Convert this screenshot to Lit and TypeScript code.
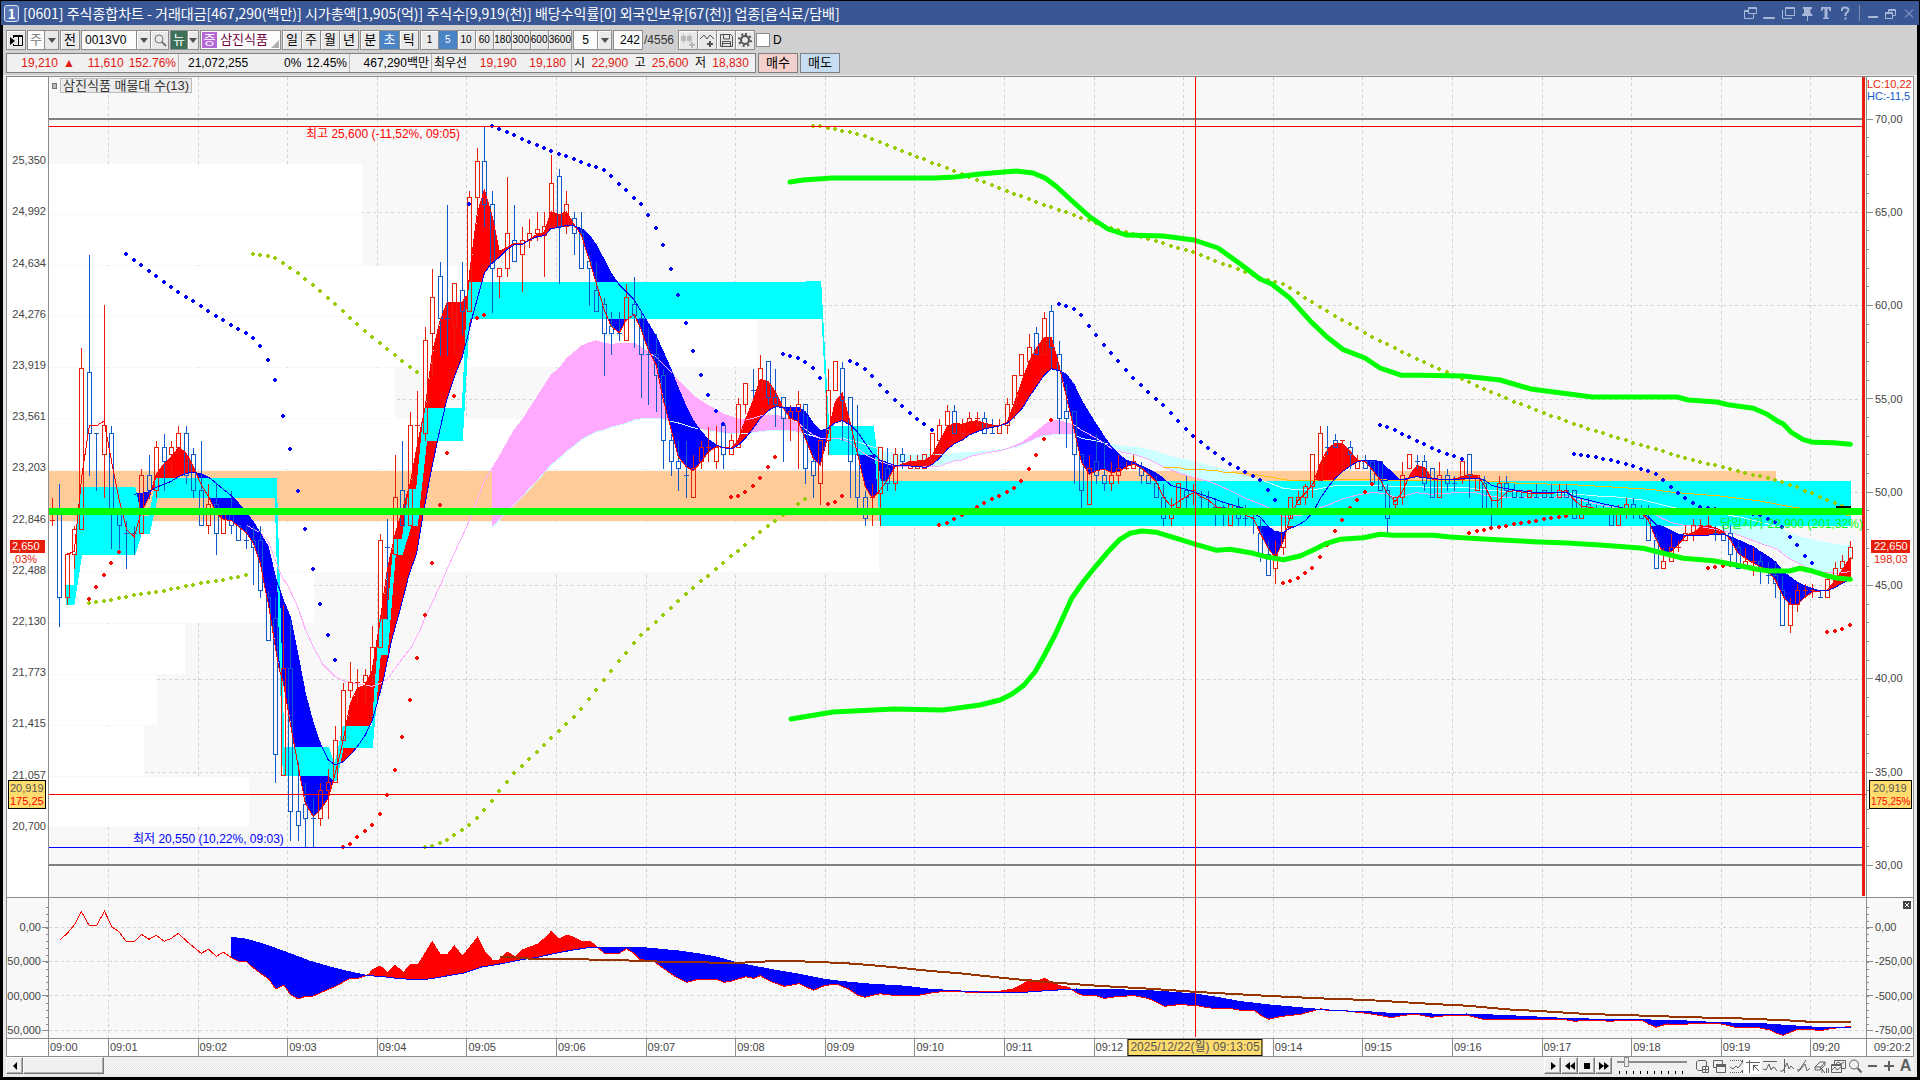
import { LitElement, html, svg, css } from "lit";
import { customElement } from "lit/decorators.js";

type Pt = [number, number];

/* Chart space: x 49..1866, price pane y 77..897, lower pane y 898..1038. */
const PLOT_X = 49;
const PLOT_W = 1817;
const MAIN_Y = 77;
const MAIN_H = 820;
const SUB_Y = 898;
const SUB_H = 140;
const BAR_X0 = 52;
const BAR_STEP = 1798 / 241;

const barX = (i: number) => Math.floor(BAR_X0 + 0.1 + i * BAR_STEP) + 0.5;

/* Points are stored in fine units relative to a local origin. */
function pts(ox: number, oy: number, s: string, sx = 3): Pt[] {
  return s
    .trim()
    .split(/\s+/)
    .map((p) => {
      const [x, y] = p.split(",").map(Number);
      return [ox + x / sx, oy + y / 3] as Pt;
    });
}

function at(line: Pt[], x: number): number {
  if (x <= line[0][0]) return line[0][1];
  for (let k = 1; k < line.length; k++) {
    const [x1, y1] = line[k];
    if (x <= x1) {
      const [x0, y0] = line[k - 1];
      return x1 === x0 ? y1 : y0 + ((y1 - y0) * (x - x0)) / (x1 - x0);
    }
  }
  return line[line.length - 1][1];
}

const linePath = (p: Pt[]) => "M" + p.map(([x, y]) => `${x.toFixed(1)} ${y.toFixed(1)}`).join("L");

/* Columns between two lines, split by which one lies on top. */
function between(a: Pt[], b: Pt[], from: number, to: number) {
  let above = "";
  let below = "";
  for (let x = Math.ceil(from); x <= to; x++) {
    const ya = at(a, x);
    const yb = at(b, x);
    const seg = `M${x + 0.5} ${ya.toFixed(1)}V${yb.toFixed(1)}`;
    if (ya < yb) above += seg;
    else below += seg;
  }
  return { above, below };
}

/* ---- candles: colour high top bottom low ---- */
const CANDLES: Array<{ i: number; oy: number; d: string }> = [
  { i: 0, oy: 200, d: `r 891 960 960 977|b 850 940 1192 1278|r 1063 1063 1192 1213|r 975 988 1063 1105|r 441 505 988 988|b 162 517 700 827|b 700 700 700 872|r 312 675 763 893|b 675 700 930 1044|b 925 925 976 1044|b 960 1000 1000 1106|b 975 1000 1000 1063|r 804 826 1000 1000|b 762 826 872 895|r 720 742 872 893|b 699 742 784 872|r 720 742 763 826|r 675 700 742 763|b 675 700 826 850|b 741 763 871 893|b 720 871 976 976|r 850 913 976 1000|b 850 913 1000 1063|r 935 935 1000 1000|b 871 935 976 1000|b 976 976 1021 1021|b 976 1021 1021 1044|b 976 1021 1042 1152|b 976 1021 1171 1192` },
  { i: 29, oy: 580, d: `b 30 52 181 181|b 50 115 523 608|r 72 265 586 586|b 115 265 694 782|b 545 694 737 782|b 606 673 715 801|b 652 715 715 801|r 606 631 715 737|r 565 606 631 715|r 436 481 607 607|r 306 331 481 481|r 243 307 331 352|r 265 307 307 375|r 265 286 307 373|r 135 202 286 306|r -140 -119 202 202|b -185 -98 -98 118` },
  { i: 46, oy: 200, d: `r 762 892 1063 1063|b 720 871 975 975|r 633 675 975 975|r 570 676 676 760|r 378 421 700 722|r 205 292 400 527|b 183 229 355 465|b 12 355 355 465|r 250 250 379 465|b 183 271 334 402` },
  { i: 56, oy: 110, d: `r 240 262 604 604|r 111 154 262 304|b 50 154 283 350|b 240 283 475 606|r 475 475 499 562|r 199 370 475 500|b 283 391 454 454|r 349 391 433 543|r 324 370 391 411|r 304 358 370 392|r 304 349 375 500|r 133 220 349 349|b 175 199 349 521|r 240 283 349 370|b 304 325 370 434|b 304 370 475 475|b 433 454 475 585|b 454 541 604 604|b 562 583 670 797|b 604 650 670 734|b 604 670 670 692|r 520 562 691 691|b 499 583 616 713|b 604 625 733 863|b 649 733 733 884|b 670 733 796 905|b 775 796 991 1076|b 970 991 1054 1097|b 990 1054 1075 1141|b 990 1097 1097 1163|r 1033 1076 1162 1162|r 990 1012 1054 1076|r 948 1012 1012 1055|r 945 1012 1054 1076|b 945 945 1033 1076|r 970 991 1033 1033|r 863 884 1012 1012|r 820 820 884 910|b 775 841 841 863|r 733 775 841 841|b 754 754 862 884|b 775 862 884 948|b 862 862 925 1055|r 884 905 925 992|r 841 884 905 1076|b 883 883 1075 1120|b 1033 1054 1096 1163|r 990 990 1120 1184|r 775 841 991 1033|r 754 754 841 841|b 754 775 871 991|b 862 862 1054 1162|b 883 1033 1162 1195|b 1141 1162 1225 1247|r 1120 1162 1162 1247|r 1012 1012 1150 1247|b 1012 1075 1120 1141|r 1012 1033 1120 1141|b 1012 1033 1054 1076|r 1033 1054 1075 1075|r 1033 1054 1075 1075` },
  { i: 117, oy: 280, d: `r 523 523 565 565|r 460 460 541 541|r 415 436 481 502|r 373 394 436 436|b 373 394 460 460|r 415 436 460 481|r 394 415 436 436|r 394 415 415 436|b 394 415 460 460|b 415 460 460 460|r 415 436 460 460|r 352 373 436 460|r 286 286 373 415|r 223 223 286 286|r 160 202 244 244|b 139 160 223 223|r 94 115 223 223|b 73 94 202 265|b 181 223 415 460|b 310 394 415 502|b 394 394 523 610|b 523 523 631 685|r 523 565 673 673|b 460 544 586 610|b 481 586 610 631|r 544 586 610 631|r 523 565 586 610|r 544 565 565 568|r 523 544 565 565|b 544 565 586 610|b 565 586 610 610|b 586 610 652 652|b 610 652 715 736|r 652 700 715 736|r 610 610 683 683|b 586 631 652 685|r 610 631 631 673|b 631 652 652 683|b 631 652 652 683|b 652 683 683 736|b 673 683 700 736|r 673 673 736 736|b 652 683 715 736|b 673 715 715 736|b 694 715 715 760|b 715 760 823 845|b 781 823 886 886|r 781 823 865 910|r 700 700 802 823|r 652 652 715 715|r 631 652 673 673|r 610 619 652 673|r 523 523 619 652|r 436 460 600 600|b 436 502 502 523|b 460 481 502 502|r 481 481 481 565|b 481 502 523 565|r 523 544 565 565|b 523 544 565 565|b 544 544 610 610|b 544 544 631 631|b 610 631 715 760|r 652 652 673 683` },
  { i: 181, oy: 400, d: `r 184 226 292 313|r 163 163 205 205|b 163 184 184 205|b 163 184 250 271|b 205 205 292 292|r 184 226 292 292|b 205 226 250 271|b 226 250 250 271|r 184 184 238 250|b 163 163 226 292|r 226 226 271 271|b 226 250 325 325|b 292 325 325 376|r 226 250 325 325|b 226 250 271 292|b 250 271 292 292|b 271 292 292 292|r 271 271 292 292|b 250 292 292 292|b 271 271 292 292|b 250 292 292 292|r 250 271 292 292|b 250 271 292 292|b 271 271 355 355|r 292 340 355 355|b 292 313 325 325|b 313 325 325 325|b 313 325 325 325|b 313 340 376 376|r 313 340 376 376|r 292 313 325 355|b 292 313 325 355|b 313 340 355 355|b 313 355 421 421|b 400 421 505 505|r 442 484 505 505|r 400 442 484 484|r 421 442 442 455|r 373 400 421 421|r 355 376 400 421|r 355 376 376 400|r 346 376 376 400|b 376 400 400 421|b 376 400 421 421|b 373 400 463 484|b 421 442 505 505|r 442 484 505 505|r 442 484 484 526|b 463 484 505 550|b 484 526 526 550|b 484 526 550 592|b 526 571 676 676|r 592 613 676 697|r 550 571 613 634|r 550 571 571 592|r 550 571 571 592|b 571 592 592 592|r 526 538 592 592|r 484 505 550 550|r 463 484 505 505|r 421 442 475 475` },
];

function candlePaths() {
  let up = "";
  let down = "";
  for (const seg of CANDLES) {
    seg.d.split("|").forEach((row, k) => {
      const [c, ...v] = row.trim().split(/\s+/);
      const [h, t, b, l] = v.map((n) => Math.floor(seg.oy + Number(n) / 3) + 0.5);
      const x = barX(seg.i + k);
      let d = `M${x} ${h}V${t}M${x} ${b}V${l}`;
      d += t === b ? `M${x - 2.5} ${t}H${x + 2.5}` : `M${x - 2} ${t}H${x + 2}V${b}H${x - 2}Z`;
      if (c === "r") up += d;
      else down += d;
    });
  }
  return { up, down };
}

/* ---- moving averages ---- */
const FAST: Pt[] = [
  ...pts(0, 200, "200,1063 223,1055 245,830 268,677 290,677 312,663 334,780 358,900 380,990 403,1010 424,935 448,890 469,822 491,793 514,770 536,742 559,760 580,800 604,855 626,890 649,940 670,958 694,962 716,980 740,1000 760,1030 781,1090 800,1190"),
  ...pts(0, 580, "805,70 826,200 838,270 850,305 871,430 895,560 916,670 940,710 961,690 985,655 1006,580 1030,480 1051,370 1072,325 1096,315 1117,270 1141,120"),
  ...pts(0, 200, "1162,1110 1186,1000 1207,930 1231,850 1253,730 1276,620 1297,460 1321,360 1342,306 1363,306 1387,308 1395,290"),
  ...pts(450, 110, "52,560 60,480 82,310 103,240 127,320 148,425 172,412 193,400 217,402 238,388 262,372 283,368 304,305 328,315 349,305 373,345 394,375 418,450 439,520 463,600 484,650 508,668 529,630 553,613 574,660 595,720 619,765 640,870 664,960 685,1040 709,1070 730,1082 754,1055 775,1025 799,1010 820,1012 844,1015 865,990 886,930 910,870 931,808 955,815 976,845 1000,895 1021,925 1045,935 1066,985 1090,1045 1111,1065 1135,970 1156,875 1177,850 1201,940 1222,1030 1246,1130 1267,1165 1291,1140 1312,1110 1336,1070 1357,1062 1381,1055 1402,1053"),
  ...pts(920, 280, "15,541 38,525 58,485 82,440 103,430 127,433 148,426 172,422 193,430 217,435 238,437 262,425 283,370 307,300 328,245 349,205 373,172 394,172 418,260 439,350 463,450 484,545 508,583 529,572 553,568 574,577 598,575 619,560 640,552 664,565 685,582 709,605 730,650 754,680 775,665 799,650 823,637 844,650 865,660 889,680 910,686 931,690 955,690 976,706 1000,715 1021,760 1045,805 1066,832 1090,785 1111,710 1135,660 1156,640 1180,610 1201,550 1225,505 1246,490 1267,492 1291,515 1312,540 1336,545 1357,570 1381,600 1402,640 1426,665 1447,635"),
  ...pts(1400, 400, "31,222 52,196 76,205 97,238 142,240 170,235 187,230 208,222 232,228 250,250 277,303 298,300 322,275 343,272 388,280 454,280 478,277 499,272 523,300 544,318 589,325 634,345 679,325 724,338 745,360 769,420 790,458 814,455 835,435 859,405 880,398 904,380 925,378 949,385 970,395 991,420 1015,460 1036,475 1060,490 1081,500 1105,515 1126,540 1150,590 1171,615 1195,612 1216,590 1240,575 1261,573 1282,570 1306,540 1327,510 1351,472"),
];

const SLOW: Pt[] = [
  ...pts(0, 200, "403,883 424,880 448,875 469,862 491,853 514,844 536,830 559,820 580,817 604,822 626,832 649,850 670,868 694,887 716,910 740,940 760,965 781,1000 805,1040 826,1130 850,1200"),
  ...pts(0, 580, "871,110 895,230 916,340 940,430 961,490 985,540 1006,555 1030,545 1051,525 1072,500 1096,465 1117,420 1130,375 1150,300 1175,180 1200,90 1222,5"),
  ...pts(0, 200, "1225,1130 1250,1060 1270,940 1290,830 1315,710 1340,600 1363,530 1387,470 1400,420 1420,340 1453,220"),
  ...pts(450, 110, "120,465 148,442 172,418 193,405 217,403 238,390 262,380 283,377 304,355 328,353 349,346 373,348 394,355 418,375 439,405 463,450 484,490 508,525 529,545 553,570 574,605 595,640 619,680 640,725 664,780 685,835 709,890 730,932 754,965 775,988 799,1005 820,1013 844,1017 865,1005 886,985 910,955 931,925 955,902 976,890 1000,892 1021,891 1045,892 1066,905 1090,940 1111,962 1135,955 1156,938 1177,932 1201,945 1222,965 1246,1000 1267,1030 1291,1050 1312,1058 1336,1066 1357,1065 1402,1070"),
  ...pts(920, 280, "20,562 38,553 58,535 82,508 103,492 127,480 148,465 172,455 193,447 217,442 238,438 262,430 283,410 307,385 328,350 349,320 373,285 394,266 418,272 439,283 463,315 484,360 508,400 529,433 553,470 574,500 598,525 619,540 640,547 664,558 685,568 709,580 730,595 754,617 799,628 865,650 910,667 976,686 1021,712 1045,740 1066,755 1090,757 1111,745 1135,735 1156,722 1180,695 1201,655 1225,620 1246,595 1267,575 1291,558 1312,545 1336,541 1357,540 1381,545 1402,565 1426,585"),
  ...pts(1400, 400, "0,240 50,230 97,236 163,240 187,236 232,234 253,240 277,257 298,262 343,270 400,277 454,278 499,277 523,290 568,301 612,312 660,322 720,335 745,350 769,375 790,380 814,392 835,403 859,406 904,407 949,403 970,403 991,410 1015,420 1036,430 1060,440 1081,455 1105,470 1126,485 1150,515 1171,532 1195,548 1216,558 1240,566 1261,573 1282,572 1306,562 1327,550 1351,537"),
];

/* ---- cloud ---- */
const SPAN_A: Pt[] = [
  ...pts(0, 200, "740,975 760,988 781,998 805,1025 826,1080 850,1140"),
  ...pts(0, 580, "860,10 893,80 916,148 940,200 970,255 985,270 1006,290 1030,302 1072,312 1117,319 1141,310 1162,297 1186,265 1210,232 1235,200 1260,150 1280,100 1305,50 1328,0"),
  ...pts(0, 200, "1340,1110 1363,1060 1400,980 1430,905 1453,843"),
  ...pts(450, 110, "126,1075 148,1040 193,960 217,930 262,860 304,795 328,775 349,747 373,727 394,708 418,698 439,692 463,700 484,703 508,701 529,700 553,700 574,712 595,727 619,742 640,762 664,787 685,812 709,835 730,858 754,873 775,887 799,900 820,912 844,920 865,928 886,930 910,925 931,918 955,915 976,916 1000,921 1021,930 1045,940 1066,957 1090,975 1111,985 1156,985 1177,988 1201,1000 1222,1015 1246,1033 1267,1045 1291,1055 1336,1068"),
  ...pts(920, 280, "38,560 60,558 82,550 103,543 127,540 148,530 193,520 250,510 283,498 307,487 328,472 349,455 373,435 394,421 418,422 439,428 463,435 484,450 508,463 529,475 553,490 574,505 598,515 640,523 664,530 685,537 709,550 730,560 775,578 823,593 865,604 889,613 931,632 976,655 1021,672 1045,683 1090,710 1145,706 1190,687 1225,675 1267,657 1312,645 1360,637 1402,642 1426,652"),
  ...pts(1400, 400, "20,285 50,278 90,283 140,280 187,277 232,279 253,285 298,292 400,293 499,290 590,312 650,325 745,332 780,352 814,368 850,375 910,381 970,392 1015,405 1081,430 1130,447 1171,478 1216,500 1261,515 1306,520 1351,515"),
];
const SPAN_B: Pt[] = [
  ...pts(450, 110, "126,1253 148,1230 172,1206 217,1160 262,1112 304,1065 328,1045 349,1025 400,986 439,965 463,960 484,952 529,940 553,930 574,926 630,925 656,933 690,940 730,953 775,963 820,969 886,972 931,965 955,962 1021,963 1066,971 1111,985 1177,984 1222,995 1276,1013 1291,1022 1350,1033"),
  ...pts(920, 280, "38,524 82,523 127,519 193,515 250,508 283,503 328,485 349,475 373,467 418,463 463,463 484,475 529,483 574,493 619,500 664,504 709,515 754,530 823,545 889,563 955,582 1021,600 1048,608 1090,625 1140,630 1190,628 1240,618 1320,615 1400,618"),
  ...pts(1400, 400, "0,260 50,260 90,262 187,262 240,268 320,275 400,277 499,280 590,288 650,291 730,300 769,310 830,325 940,340 985,345 1036,355 1081,366 1126,378 1171,402 1216,415 1261,425 1306,434 1351,437"),
];

const YELLOW: Pt[] = [
  ...pts(920, 280, "730,562 775,562 800,568 883,571 910,576 1000,583 1045,590 1100,600 1200,602 1290,598 1400,600"),
  ...pts(1400, 400, "40,241 250,243 380,251 500,253 620,260 750,268 830,278 960,288 1080,303 1180,322 1250,330 1351,347"),
];

/* ---- cyan channel ---- */
const BAND_TOP: Pt[] = [
  ...pts(0, 200, "200,1155 222,1155 240,863 405,863 424,950 448,950 469,834 829,834"),
  ...pts(0, 580, "852,501 985,501 1000,545 1006,548 1030,438 1117,438 1140,117 1162,117"),
  ...pts(0, 200, "1183,1018 1207,1018 1228,867 1250,867 1273,624 1387,624 1405,247"),
  ...pts(450, 110, "1112,516 1136,948 1270,948 1291,1113"),
  ...pts(1400, 400, "1352,243"),
];
const BAND_BOTTOM: Pt[] = [
  ...pts(0, 200, "200,1213 222,1213 245,1063 405,1063 424,1000 448,1000 472,893 826,893"),
  ...pts(0, 580, "850,586 985,586 1003,603 1010,600 1030,501 1117,501 1141,223 1162,223"),
  ...pts(0, 200, "1186,1063 1207,1063 1234,975 1252,975 1280,721 1387,721 1408,355"),
  ...pts(450, 110, "1116,625 1138,1033 1276,1033 1291,1245"),
  ...pts(1400, 400, "1352,375"),
];
const bandPath = linePath([...BAND_TOP, ...[...BAND_BOTTOM].reverse()]) + "Z";

/* ---- thick green channel ---- */
const GREEN_UP: Pt[] = [
  [790, 182], [803, 180], [832, 178], [935, 178], [955, 177], [980, 174], [1004, 172], [1016, 171], [1033, 173], [1045, 178], [1057, 187], [1071, 200], [1090, 217], [1108, 229], [1126, 235], [1163, 236], [1194, 240], [1218, 248], [1239, 263],
  ...pts(920, 280, "1020,-3 1055,12 1110,55 1170,122 1220,170 1270,209 1335,234 1380,264 1445,286 1500,286"),
  [1463, 376], [1500, 380], [1531, 389], [1592, 397], [1677, 397],
  ...pts(1400, 400, "865,0 950,6 985,14 1060,25 1100,42 1130,62 1150,72 1175,98 1210,119 1240,127 1300,128 1351,133"),
];
const GREEN_LOW: Pt[] = [
  [791, 719], [833, 712], [894, 709], [943, 710], [980, 705], [1000, 700], [1012, 694], [1024, 685], [1035, 672], [1044, 656], [1055, 635],
  ...pts(920, 280, "455,955 490,905 520,868 560,820 600,778 630,760 665,753 710,757 760,772 820,791 890,811 930,808 1000,820 1045,832 1090,839 1140,828 1180,810 1220,790 1260,778 1330,773 1380,763 1420,766"),
  ...pts(1400, 400, "0,406 100,406 150,411 250,417 400,425 500,429 600,435 730,445 790,460 850,475 940,482 1020,497 1070,508 1110,513 1170,512 1200,505 1240,514 1280,527 1310,534 1351,538"),
];

/* ---- dotted series: one dot for each bar ---- */
interface Dots { from: number; to: number; tone: string; line: Pt[]; }
const DOTS: Dots[] = [
  { from: 10, to: 38, tone: "blue", line: [...pts(0, 200, "378,162 423,195 468,228 513,261 558,291 602,318 648,348 693,375 738,399 759,414 780,438 804,480 825,540 849,648 870,747 894,873 915,987 939,1107"), ...pts(0, 580, "960,72 984,165 1006,243")] },
  { from: 56, to: 56, tone: "blue", line: pts(450, 110, "57,282") },
  { from: 59, to: 90, tone: "blue", line: pts(450, 110, "126,47 216,87 304,123 393,156 438,171 462,180 573,282 618,354 639,405 663,477 684,555 708,639 729,723 753,795 774,855 798,903 820,945") },
  { from: 98, to: 103, tone: "blue", line: pts(450, 110, "1000,732 1021,738 1045,744 1066,756 1090,774 1111,804") },
  { from: 107, to: 118, tone: "blue", line: [...pts(450, 110, "1201,753 1222,762 1246,777 1290,825 1336,870 1380,909"), ...pts(920, 280, "15,435 36,450")] },
  { from: 135, to: 164, tone: "blue", line: pts(920, 280, "418,72 439,78 463,87 484,105 507,138 552,195 597,246 639,294 684,336 729,375 775,423 820,468 865,504 889,522 931,552 976,576 1000,588 1021,602 1045,630 1066,663") },
  { from: 178, to: 189, tone: "blue", line: [...pts(920, 280, "1381,435 1402,441 1426,450 1447,462 1470,474"), ...pts(1400, 400, "6,102 51,123 97,144 142,162 187,178")] },
  { from: 204, to: 236, tone: "blue", line: pts(1400, 400, "523,162 568,168 613,177 658,186 700,198 745,213 769,222 790,242 813,261 835,279 859,297 904,322 1000,335 1081,345 1104,357 1126,366 1150,385 1171,411 1195,441 1216,468 1240,492") },
  { from: 5, to: 9, tone: "red", line: pts(0, 200, "267,1197 288,1161 312,1125 333,1089 357,1056") },
  { from: 39, to: 54, tone: "red", line: [...pts(0, 580, "1030,801 1051,792 1072,771 1096,753 1117,735 1141,702 1162,642 1186,567 1207,465 1231,354 1252,228 1276,99"), ...pts(0, 200, "1297,1083 1321,909 1342,753 1363,579")] },
  { from: 57, to: 58, tone: "red", line: pts(450, 110, "81,624 102,615") },
  { from: 91, to: 97, tone: "red", line: pts(450, 110, "844,1161 865,1158 886,1146 910,1128 931,1104 955,1071 976,1038") },
  { from: 104, to: 106, tone: "red", line: pts(450, 110, "1135,1182 1156,1176 1177,1158") },
  { from: 119, to: 134, tone: "red", line: pts(920, 280, "58,735 82,729 103,717 127,705 172,681 193,669 238,648 283,624 307,600 328,564 349,522 373,474 394,417") },
  { from: 165, to: 177, tone: "red", line: pts(920, 280, "1090,909 1111,903 1135,894 1156,879 1180,861 1201,831 1246,750 1267,717 1291,683 1312,660 1336,635 1357,612") },
  { from: 190, to: 203, tone: "red", line: pts(1400, 400, "208,399 232,393 277,384 322,378 343,372 388,366 433,357 478,351 499,348") },
  { from: 222, to: 225, tone: "red", line: pts(1400, 400, "925,504 949,501 970,497 991,495") },
  { from: 238, to: 241, tone: "red", line: pts(1400, 400, "1282,696 1306,693 1327,687 1351,675") },
  { from: 27, to: 49, tone: "olive", line: pts(0, 200, "759,162 804,168 825,174 849,189 894,219 939,255 984,294 1029,333 1071,372 1116,411 1161,447 1206,483 1251,516") },
  { from: 5, to: 26, tone: "olive", line: [...pts(0, 580, "267,69 312,63 357,54 423,42 490,33 558,18 624,6 670,0"), ...pts(0, 200, "694,1135 740,1125")] },
  { from: 50, to: 101, tone: "olive", line: [...pts(0, 580, "1276,801 1297,798 1321,789 1342,780 1363,765 1387,750 1408,735 1431,714 1453,690 1476,663 1497,633 1521,606 1542,579"), [575, 716], [637, 639], [686, 594], ...pts(450, 110, "909,1284 931,1266 955,1248 976,1233 1000,1215 1045,1182 1066,1167")] },
  { from: 102, to: 240, tone: "olive", line: [...pts(450, 110, "1090,47 1111,47 1135,54 1177,63 1222,71 1246,78 1290,96 1336,114 1380,132 1426,150"), [1028, 199], [1102, 225], [1195, 253], [1261, 278], ...pts(920, 280, "1090,12 1155,54 1200,81 1245,108 1290,132 1335,159 1380,183 1425,204 1470,228 1491,237"), ...pts(1400, 400, "342,6 387,21 432,39 499,63 568,87 658,114 700,129 769,147 835,168 904,186 970,201 1036,219 1104,234 1150,246 1195,264 1240,282 1282,300 1327,317")] },
];

function dotPath(tone: string) {
  let d = "";
  for (const s of DOTS) {
    if (s.tone !== tone) continue;
    for (let i = s.from; i <= s.to; i++) {
      const x = Math.floor(barX(i));
      const y = Math.round(at(s.line, x));
      d += `M${x - 1} ${y - 2}h2v1h1v2h-1v1h-2v-1h-1v-2h1z`;
    }
  }
  return d;
}

/* ---- volume-by-price rows ---- */
const PROFILE = [362, 362, 488, 757, 395, 1104, 1776, 879, 314, 185, 157, 144, 249];
const PROFILE_Y = 164;
const PROFILE_STEP = 51;

const MINUTES = Array.from({ length: 20 }, (_, i) => 108.5 + Math.round(i * 89.6));
const MAIN_GRID = [212.5, 305.5, 399.5, 492.5, 585.5, 679.5, 772.5];
const SUB_GRID = [927.5, 961.5, 995.5, 1030.5];

/* ---- lower pane ---- */
const SUB_FAST: Pt[] = [
  ...pts(0, 870, "146,211 165,190 184,162 199,124 218,166 237,166 256,124 274,170 292,186 309,214 330,214 347,193 365,208 383,196 402,214 420,205 437,190 456,212 475,232 493,250 511,238 530,259 547,247 566,262 585,274 604,275 620,293 640,311 658,327 676,357 695,345 712,374 731,387 748,379 768,378 785,368 820,350 858,325 880,324 904,313 912,300 931,288 950,308 968,285 988,308 1005,285 1024,284 1042,249 1059,215 1078,252 1097,252 1113,228 1133,258 1152,230 1170,201 1186,242 1206,270 1224,270 1243,246 1262,260 1280,240 1318,222 1335,204 1351,184 1370,207 1389,195 1408,203 1424,213 1445,213 1463,231 1481,250 1517,250 1535,236 1553,250", 2.45),
  ...pts(640, 870, "0,268 30,275 50,297 75,322 97,337 120,328 158,328 173,337 190,333 218,320 235,325 248,317 270,335 298,349 328,341 358,361 380,347 405,342 430,357 450,376 464,382 495,371 515,375 575,376 600,369 630,364 670,366 700,366 735,365 770,357 787,344 805,329 820,333 835,325 850,338 865,347 885,352 900,368 912,375 935,375 958,385 990,379 1020,377 1050,386 1082,409 1110,404 1145,406 1175,414 1215,415 1240,421 1268,422 1285,440 1298,448 1320,440 1365,432 1390,422 1405,416 1420,423 1450,422 1490,428 1530,437 1550,443", 2.063),
  ...pts(1400, 870, "0,438 35,433 60,435 95,442 130,438 200,436 250,448 490,448 525,454 560,450 635,454 670,450 725,450 745,462 769,472 800,462 860,463 870,460 960,461 1015,474 1070,472 1110,480 1130,490 1150,496 1190,479 1240,479 1260,482 1300,475 1352,469"),
];
const SUB_SLOW: Pt[] = [
  ...pts(0, 870, "566,202 600,207 640,220 700,246 760,274 820,295 870,309 904,317 940,320 980,326 1010,328 1050,327 1090,319 1140,308 1180,291 1220,283 1270,271 1320,261 1360,250 1400,241 1440,233 1560,232", 2.45),
  ...pts(640, 870, "0,232 30,236 80,243 120,251 160,262 197,277 230,287 280,301 330,313 380,328 420,335 480,343 550,349 600,358 650,362 700,366 800,366 850,361 900,357 1000,360 1050,362 1100,367 1145,372 1190,382 1240,395 1300,405 1360,413 1410,419 1460,423 1510,426", 2.063),
  ...pts(1400, 870, "0,432 60,430 130,434 200,432 330,437 490,445 600,448 720,449 860,453 960,458 1100,462 1200,469 1250,472 1352,472"),
];
const SUB_BROWN: Pt[] = [
  ...pts(0, 870, "1225,261 1250,261 1300,266 1424,268 1560,272", 2.45),
  ...pts(640, 870, "0,272 70,277 210,278 290,272 370,276 440,281 520,291 600,303 660,310 750,324 830,335 950,348 1050,356 1150,366 1300,378 1400,385 1500,390", 2.063),
  ...pts(1400, 870, "0,396 100,402 200,407 320,418 430,424 560,432 700,436 880,442 1010,445 1160,451 1240,456 1352,456"),
];

const PRICE_LABELS = ["25,350", "24,992", "24,634", "24,276", "23,919", "23,561", "23,203", "22,846", "22,488", "22,130", "21,773", "21,415", "21,057", "20,700"];
const SCALE_LABELS = ["70,00", "65,00", "60,00", "55,00", "50,00", "45,00", "40,00", "35,00", "30,00"];

const pctX = (x: number) => `${((x - PLOT_X) / PLOT_W) * 100}%`;
const pctY = (y: number) => `${((y - MAIN_Y) / MAIN_H) * 100}%`;

function mainPlot() {
  const ma = between(FAST, SLOW, 137, 1850);
  const cloud = between(SPAN_A, SPAN_B, 492, 1850);
  const candles = candlePaths();
  const right = PLOT_X + PLOT_W;
  return html`<svg class="plot" viewBox="${PLOT_X} ${MAIN_Y} ${PLOT_W} ${MAIN_H}" preserveAspectRatio="none" role="img" aria-label="삼진식품 차트">
    ${svg`
      <path class="grid" d=${MINUTES.map((x) => `M${x} 77V897`).join("")} />
      <path class="grid" d=${MAIN_GRID.map((y) => `M49 ${y}H1862`).join("")} />
      ${PROFILE.map((x, i) => svg`<rect class=${i === 6 ? "poc" : "profile"} x="49" y=${PROFILE_Y + i * PROFILE_STEP + (i > 5 ? 1 : 0)} width=${x - 49} height="50" />`)}
      <rect class="frame" x="49" y="118" width="1813" height="2" />
      <rect class="frame" x="49" y="864" width="1813" height="2" />
      <path class="pinkfill" d=${cloud.above} />
      <path class="palefill" d=${cloud.below} />
      <path class="redfill" d=${ma.above} />
      <path class="bluefill" d=${ma.below} />
      <path class="band" d=${bandPath} />
      <path class="pale" d=${linePath(SPAN_B)} />
      <path class="pink" d=${linePath(SPAN_A)} />
      <path class="yellow" d=${linePath(YELLOW)} />
      <path class="up" d=${candles.up} />
      <path class="down" d=${candles.down} />
      <path class="fast" d=${linePath(FAST)} />
      <path class="slow" d=${linePath(SLOW)} />
      <path class="dot blue" d=${dotPath("blue")} />
      <path class="dot red" d=${dotPath("red")} />
      <path class="dot olive" d=${dotPath("olive")} />
      <path class="channel" d=${linePath(GREEN_UP)} />
      <path class="channel" d=${linePath(GREEN_LOW)} />
      <rect class="open" x="49" y="508" width="1813" height="7" />
      <rect class="mark" x="1836" y="506" width="15" height="2" />
      <path class="high" d="M49 126.5H1862" />
      <path class="low" d="M49 847.5H1862" />
      <path class="cross" d="M49 794.5H${right}M1195.5 77V897" />
      <rect class="edge" x="1862" y="77" width="3" height="819" />
    `}
  </svg>`;
}

function subPlot() {
  const fill = between(SUB_FAST, SUB_SLOW, 231, 1850);
  return html`<svg class="plot" viewBox="${PLOT_X} ${SUB_Y} ${PLOT_W} ${SUB_H}" preserveAspectRatio="none" role="img" aria-label="보조지표">
    ${svg`
      <path class="grid" d=${MINUTES.map((x) => `M${x} 898V1038`).join("")} />
      <path class="grid" d=${SUB_GRID.map((y) => `M49 ${y}H1864`).join("")} />
      <path class="redfill" d=${fill.above} />
      <path class="bluefill" d=${fill.below} />
      <path class="fast" d=${linePath(SUB_FAST)} />
      <path class="slow" d=${linePath(SUB_SLOW)} />
      <path class="brown" d=${linePath(SUB_BROWN)} />
      <path class="cross" d="M1195.5 898V1037" />
    `}
  </svg>`;
}

const SUB_MINOR = Array.from({ length: 20 }, (_, k) => 907 + Math.round(k * 6.86)).filter((y) => y < 1036);
const subTicksRight = svg`<path class="tick" d=${SUB_GRID.map((y) => `M0 ${y}H6`).join("") + SUB_MINOR.map((y) => `M0 ${y + 0.5}H2`).join("")} />`;
const subTicksLeft = svg`<path class="tick" d=${SUB_GRID.map((y) => `M35 ${y}H41`).join("") + SUB_MINOR.map((y) => `M39 ${y + 0.5}H41`).join("")} />`;
const mainTicks = svg`<path class="tick" d=${Array.from({ length: 41 }, (_, k) => {
  const y = Math.floor(119 + k * 18.66) + 0.5;
  return `M0 ${y}H${k % 5 === 0 ? 6 : 2}`;
}).join("")} />`;

const icon = (body: unknown, w = 16, h = 16) => html`<svg class="ico" viewBox="0 0 ${w} ${h}" width=${w} height=${h} aria-hidden="true">${body}</svg>`;

const WINDOW_ICONS: Array<[string, unknown]> = [
  ["창 연결", svg`<path d="M7 5.500H2.500v8h9V9M2.500 6.500H7M6.500 2.500h8v6h-8zM6.500 3.500h8" />`],
  ["숨기기", svg`<path d="M2.500 12.500h11v1h-11z" />`],
  ["겹쳐보기", svg`<path d="M5.500 2.500h9v8h-9zM5.500 3.500h9M2.500 5v8.500h9v-1" />`],
  ["고정", svg`<path class="solid" d="M4 2h9v2h-1.500v4l2 1.500V11H3V9.500l2-1.500V4H4z" /><path d="M8.500 11v5" />`],
  ["글꼴", svg`<path class="solid" d="M3 2h10v4h-1.500l-.5-2.300H9.500v8.800l1.500.5v1H5v-1l1.500-.5V3.700H5L4.500 6H3z" />`],
  ["도움말", svg`<path class="bold" d="M5 6V4.500C5 3 6.500 2.500 8 2.500S11.500 3 11.500 5 8.500 7.500 8.500 9.500V11" /><path class="solid" d="M7.500 12.500h2v2h-2z" />`],
];

const TOOL_ICONS: Array<[string, unknown]> = [
  ["지표 추가", svg`<path d="M8 12.500H4L2.500 11V4L4 2.500h7.500L12.500 4v4M8.500 8.500h6v6h-6zM11.500 8.500v6M8.500 11.500h6" />`],
  ["화면 복사", svg`<path d="M2.500 2.500h9v7h-9z" /><path class="paper" d="M5.500 6.500h9v8h-9z" /><path class="solid" d="M5 6h10v3H5z" />`],
  ["영역 선택", svg`<path stroke-dasharray="1 1" d="M2 2.500h11M2 14.500h11" /><path d="M2 9l3 2 3-3 2 2 4-5M13 3.500h2M14.500 2v3M13 13.500h2M14.500 12v3" />`],
  ["십자선", svg`<path d="M1 4.500h14M4.500 2v13" /><path d="M8 7l6 6M8.500 7.500v5M8 7.500h5" />`],
  ["추세 수평선", svg`<path d="M1 3.500h14M1 11l3 1 3-6 2 6 2-3 2 1 2 3" />`],
  ["추세 수직선", svg`<path d="M5.500 1v14M1 13h3l4-8 2 6 2-3 3 3" />`],
  ["추세선", svg`<path d="M2 14L10 2M1 12h3l5-6 2 7 3-3" />`],
  ["지우개", svg`<path d="M2 9l5-5h5L8 9zM2 9v3h5l1-3M7 12l5-5V4M9 11v4M9 11l3 4M13.500 10v5M15.500 10v5" />`],
  ["차트 복사", svg`<path d="M4.500 2.500h11v8h-11zM5 7l3-3 3 2 3-2" /><path class="paper" d="M1.500 6.500h10v8h-10z" /><path d="M2 12l3-3 2 3 4-3M2 7.500h9" />`],
  ["돋보기", svg`<circle cx="7" cy="6.500" r="4.500" /><path class="bold" d="M10.500 10l4 4.500" />`],
  ["축소", svg`<path class="bold" d="M4 8h9" />`],
  ["확대", svg`<path class="bold" d="M3 8h10M8 3v10" />`],
];

@customElement("app-root")
export class AppRoot extends LitElement {
  static styles = css`
    :host {
      display: flex;
      flex-direction: column;
      box-sizing: border-box;
      min-height: 100vh;
      padding: 1px 1px 3px;
      background: #000;
      color: #000;
      font: 13px/16px "Liberation Sans", "Noto Sans CJK KR", sans-serif;
      white-space: nowrap;
    }
    * { box-sizing: border-box; }
    button, input, select { font: inherit; color: inherit; margin: 0; padding: 0; border: 0; border-radius: 0; background: none; min-width: 0; }
    button { display: inline-flex; align-items: center; justify-content: center; }
    .ico { display: block; flex: none; fill: none; stroke: currentColor; }
    .ico .solid { fill: currentColor; stroke: none; }
    .ico .paper { fill: #f0f0f0; }
    .ico .bold { stroke-width: 2; }

    .title { display: flex; align-items: center; height: 24px; padding: 0 2px 0 3px; background: #3a5795; color: #fff; font-family: "Noto Sans CJK KR", sans-serif; font-size: 14px; }
    .badge { width: 15px; height: 17px; border: 1px solid #dbe3f5; border-radius: 3px; background: #5b77b5; font-weight: bold; font-size: 13px; text-align: center; line-height: 15px; margin-right: 4px; }
    .title h1 { flex: 1; margin: 0; font: inherit; }
    .winbtns { display: flex; gap: 3px; color: #a8b6d8; }
    .winctl { display: flex; gap: 2px; margin-left: 6px; padding-left: 5px; border-left: 1px solid #7d8aa8; color: #a8b6d8; }

    .body { flex: 1; display: flex; flex-direction: column; margin: 0 2px; background: #e8e8e8; }
    .tools { background: #d0d0d0; padding: 5px 3px 2px; margin-bottom: 1px; display: flex; flex-direction: column; gap: 3px; height: 50px; }
    .row { display: flex; height: 20px; gap: 1px; align-items: stretch; }
    .row + .row { gap: 2px; }
    .grp { display: flex; border: 1px solid #8c8c8c; background: #fcfcfc; }
    .grp > button { flex: 1; background: #e9e9e9; box-shadow: inset 1px 1px #fff; }
    .grp > button + button, .grp > input + button { border-left: 1px solid #8c8c8c; }
    .grp > button.on { background: #4b84c6; color: #fff; box-shadow: none; }
    .grp > button.caret { flex: 0 0 14px; }
    .tri { width: 0; height: 0; border: 4px solid transparent; border-top: 5px solid #505050; border-bottom: 0; }
    .w20 { width: 20px; } .w29 { width: 29px; } .w30 { width: 30px; } .w32 { width: 32px; } .w39 { width: 39px; }
    .w59 { width: 59px; } .w77 { width: 77px; } .w81 { width: 81px; } .w88 { width: 88px; } .w152 { width: 152px; }
    .mins { font-size: 10px; }
    .mins > button { min-width: auto; }
    .pick { display: grid; grid-template-columns: 1fr 14px; color: #777; }
    .pick select { grid-area: 1 / 1 / 2 / 3; appearance: none; padding-left: 2px; }
    .pick i { grid-area: 1 / 2; background: #e9e9e9; border-left: 1px solid #8c8c8c; display: flex; align-items: center; justify-content: center; pointer-events: none; }
    .code input, .num input, .count input, .total { font-size: 12px; }
    .code input { width: 54px; padding-left: 3px; }
    .grp > button.find { flex: 0 0 18px; color: #777; }
    .grp > button.new { flex: 0 0 16px; background: #3a7158; color: #fff; box-shadow: none; }
    .name { align-items: center; color: #70003c; padding: 1px; gap: 3px; }
    .name b { width: 17px; height: 100%; background: #b469d6; color: #fff; font-weight: normal; text-align: center; line-height: 16px; }
    .name .corner { margin-left: auto; align-self: flex-end; border: 4px solid; border-color: transparent #b0b0b0 #b0b0b0 transparent; }
    .num input { width: 23px; text-align: center; }
    .count input { width: 28px; text-align: right; padding-right: 2px; }
    .total { width: 33px; line-height: 20px; color: #333; }
    .chk { display: flex; align-items: center; gap: 3px; font-size: 12px; }
    .chk input { appearance: none; width: 14px; height: 14px; border: 1px solid #8c8c8c; background: #fff; }
    .acts { color: #505050; }
    .acts .dim { color: #b8b8b8; }

    .quote { display: flex; width: 750px; border: 1px solid #808080; background: #f0f0f0; font-size: 12px; line-height: 18px; }
    .quote > div { display: flex; justify-content: flex-end; gap: 6px; padding: 0 2px; border-left: 1px solid #b4b4b4; }
    .quote > div:first-child { border-left: 0; width: 171px; gap: 5px; }
    .quote > .q2 { width: 171px; gap: 5px; } .q3 { width: 82px; }
    .quote > .q4 { width: 140px; justify-content: space-between; padding: 0 5px 0 2px; }
    .quote > .q5 { flex: 1; justify-content: space-between; gap: 0; padding: 0 6px 0 2px; }
    .quote > .q2 > :first-child { margin-right: auto; padding-left: 7px; }
    .rise { color: #e01810; }
    .gap { padding-right: 8px; }
    .buy, .sell { width: 40px; border: 1px solid #808080; background: #f4d0cc; }
    .sell { background: #c6dcf2; }

    .frame-box { flex: 1; margin: 0 3px; border: 1px solid #8c8c8c; border-bottom: 0; display: grid; grid-template-columns: 42px minmax(0, 1fr) 47px; grid-template-rows: minmax(0, 821fr) minmax(0, 141fr) 18px; background: #fff; font-size: 11px; color: #444; }
    .frame-box > * { position: relative; overflow: hidden; border-bottom: 1px solid #8c8c8c; min-height: 0; }
    .left { border-right: 1px solid #8c8c8c; }
    .right { border-left: 1px solid #8c8c8c; }
    .cell { background: #f8f8f8; }
    .labels { display: grid; height: 100%; }
    .left .labels.main { grid-template-rows: 577fr repeat(14, 512fr) 455fr; align-items: center; justify-items: end; padding-right: 2px; }
    .right .labels.main { grid-template-rows: 336fr repeat(8, 933fr) 400fr; padding-left: 8px; }
    .labels.sub { grid-template-rows: 210fr repeat(3, 343fr) 161fr; padding-left: 8px; }
    .left .labels.sub { padding: 0 7px 0 0; justify-items: end; }
    .axis-svg { position: absolute; inset: 0; width: 100%; height: 100%; }
    .tick { stroke: #8c8c8c; fill: none; shape-rendering: crispEdges; }
    .plot { display: block; width: 100%; height: 100%; position: absolute; inset: 0; }
    .plot path { fill: none; shape-rendering: crispEdges; }
    .plot rect { shape-rendering: crispEdges; }
    .plot .grid { stroke: #d2d2d2; stroke-dasharray: 3 3; }
    .plot .profile { fill: #fff; }
    .plot .poc { fill: #fc9; }
    .plot .frame { fill: #808080; }
    .plot .pinkfill { stroke: #faf; }
    .plot .palefill { stroke: #cff; }
    .plot .redfill { stroke: #f00; }
    .plot .bluefill { stroke: #00f; }
    .plot .band { fill: #0ff; stroke: #0ff; }
    .plot .pale { stroke: #cff; }
    .plot .pink { stroke: #faf; }
    .plot .yellow { stroke: #ffbf00; }
    .plot .up { stroke: #e61e0a; }
    .plot .down { stroke: #0f5ac8; }
    .plot .fast { stroke: #f00; }
    .plot .slow { stroke: #00f; }
    .plot .brown { stroke: #930; stroke-width: 2; }
    .plot .dot.blue { fill: #00f; }
    .plot .dot.red { fill: #f00; }
    .plot .dot.olive { fill: #9c0; }
    .plot .channel { stroke: #0f0; stroke-width: 5; stroke-linecap: round; stroke-linejoin: round; shape-rendering: auto; }
    .plot .open { fill: #0f0; }
    .plot .mark { fill: #000; }
    .plot .high, .plot .cross { stroke: #f00; }
    .plot .low { stroke: #00f; }
    .plot .edge { fill: #e61e0a; }

    .legend { position: absolute; top: 1px; left: 3px; display: flex; align-items: center; gap: 3px; color: #333; }
    .legend i { width: 5px; height: 6px; border: 1px solid #777; background: #bbb; }
    .legend span { border: 1px solid #bcbcbc; background: #ececec; line-height: 13px; padding: 0 2px; font-size: 13px; }
    .note { position: absolute; transform: translateY(-50%); font-size: 12px; }
    .note.hi { color: #f00; } .note.lo { color: #00f; } .note.op { color: #0f0; }
    .tag { position: absolute; left: 4px; right: 3px; line-height: 13px; color: #e61e0a; display: flex; flex-direction: column; }
    .tag b { font-weight: normal; background: #e61e0a; color: #fff; padding-left: 3px; }
    .tag span { padding-left: 3px; }
    .left .tag.last { left: 3px; } .left .tag.last > * { padding-left: 2px; }
    .tag.cur { left: 2px; right: 1px; height: 29px; border: 1px solid #000; background: #ffdc6e; color: #f00; padding: 1px 0 0 1px; }
    .left .tag.cur { left: 1px; right: 2px; }
    .tag.cur > * { padding: 0; }
    .tag.cur em { font-style: normal; color: #555; padding-left: 2px; }
    .right .tag.cur span { font-size: 10px; }
    .left .tag.cur em { padding-left: 0; }
    .lchc { position: absolute; top: 1px; left: 0; line-height: 12px; color: #e61e0a; }
    .lchc span { display: block; color: #0f5ac8; }
    .close { position: absolute; top: 3px; right: 2px; width: 8px; height: 8px; background: #444; color: #fff; }
    .times { display: grid; grid-template-columns: 590fr repeat(19, 896fr) 556fr; line-height: 17px; font-size: 11px; }
    .times span { padding-left: 1px; border-left: 1px solid #8c8c8c; }
    .times span:first-child { border-left: 0; }
    .times .now { position: absolute; top: 0; height: 17px; line-height: 15px; padding: 0 2px; border: 1px solid #000; background: #ffdc6e; color: #555; transform: translateX(-50%); font-size: 12px; }
    .end { padding-left: 7px; line-height: 17px; }

    .foot { display: flex; height: 17px; margin: 0 3px 3px; background: #f0f0f0; color: #606060; }
    .foot button { width: 17px; }
    .raised { border: 1px solid; border-color: #fff #777 #777 #fff; background: #f0f0f0; color: #000; box-shadow: inset -1px -1px #b0b0b0; }
    .foot .raised { border: 1px solid; border-color: #fff #777 #777 #fff; background: #f0f0f0; }
    .thumb { width: 81px; }
    .track { flex: 1; background: repeating-conic-gradient(#e9e9e9 0 25%, #f8f8f8 0 50%) 0 0 / 2px 2px; }
    .solidico { fill: #000; stroke: none; }
    .speed { width: 70px; margin: 0 6px 0 5px; display: flex; flex-direction: column; }
    .speed input { appearance: none; height: 10px; width: 100%; background: linear-gradient(#8c8c8c 0 0) 0 4px / 100% 2px no-repeat; display: block; }
    .speed input::-webkit-slider-thumb { appearance: none; width: 5px; height: 10px; background: #e9e9e9; border: 1px solid #909090; }
    .speed i { height: 3px; margin: 4px 1px 0 2px; background: repeating-linear-gradient(90deg, #000 0 1px, transparent 1px 7px); }
    .foot .active { background: #fff; }
    .foot .letter { font: bold 16px/17px "Liberation Sans", sans-serif; }
  `;

  private seg(cls: string, items: string[], on: string) {
    return html`<div class="grp ${cls}" role="group">${items.map((t) => html`<button class=${t === on ? "on" : ""}>${t}</button>`)}</div>`;
  }

  private toolbar() {
    const tri = html`<span class="tri"></span>`;
    return html`<div class="row">
      <div class="grp w20"><button aria-label="패널">${icon(svg`<path d="M5.500 3.500h9v10h-9M5.500 3v3M5.500 12v2M10.500 4v9M5 4.500h9.500" /><path class="solid" d="M2 5l5 4-5 4z" />`)}</button></div>
      <div class="grp w32 pick"><select aria-label="종류"><option>주</option></select><i>${tri}</i></div>
      <div class="grp w20"><button>전</button></div>
      <div class="grp w88 code">
        <input aria-label="종목코드" value="0013V0" /><button class="caret" aria-label="종목 목록">${tri}</button>
        <button class="find" aria-label="검색">${icon(svg`<circle cx="7" cy="7" r="4" /><path class="bold" d="M10 10l4 4" />`)}</button>
      </div>
      <div class="grp w29"><button class="new">뉴</button><button aria-label="뉴스 목록">${tri}</button></div>
      <div class="grp w81 name"><b>증</b><span>삼진식품</span><i class="corner"></i></div>
      ${this.seg("w77", ["일", "주", "월", "년"], "")}
      ${this.seg("w59", ["분", "초", "틱"], "초")}
      ${this.seg("w152 mins", ["1", "5", "10", "60", "180", "300", "600", "3600"], "5")}
      <div class="grp w39 num"><input aria-label="간격" value="5" /><button class="caret" aria-label="간격 목록">${tri}</button></div>
      <div class="grp w30 count"><input aria-label="봉 개수" value="242" /></div>
      <span class="total">/4556</span>
      <div class="grp w77 acts">
        <button class="dim" aria-label="봉 추가">${icon(svg`<path class="solid" d="M1 4h5v5H1zM3 2h1v9H3zM7 4h5v5H7zM9 2h1v9H9zM11 10h2v2h2v2h-2v2h-2v-2H9v-2h2z" />`)}</button>
        <button aria-label="지표 추가">${icon(svg`<path d="M1 7l4-4 3 4 3-4 4 4" /><path class="solid" d="M10 9h2v2h2v2h-2v2h-2v-2H8v-2h2z" />`)}</button>
        <button aria-label="저장">${icon(svg`<path d="M2.500 2.500h10l2 2v10h-12zM5.500 3v4h6V3M4.500 14V9.500h8V14M5 11.500h7" />`)}</button>
        <button aria-label="설정">${icon(svg`<circle cx="8" cy="8" r="4" stroke-width="2" /><path stroke-width="2" stroke-dasharray="2 2.700" d="M8 2a6 6 0 1 1 0 12A6 6 0 0 1 8 2" />`)}</button>
      </div>
      <label class="chk"><input type="checkbox" />D</label>
    </div>`;
  }

  private quote() {
    return html`<div class="row">
      <div class="quote">
        <div class="rise"><span>19,210</span><span class="gap">▲</span><span>11,610</span><span>152.76%</span></div>
        <div class="q2"><span>21,072,255</span><span>0%</span><span>12.45%</span></div>
        <div class="q3"><span>467,290백만</span></div>
        <div class="q4"><span>최우선</span><span class="rise">19,190</span><span class="rise">19,180</span></div>
        <div class="q5"><span>시</span><span class="rise">22,900</span><span>고</span><span class="rise">25,600</span><span>저</span><span class="rise">18,830</span></div>
      </div>
      <button class="buy">매수</button><button class="sell">매도</button>
    </div>`;
  }

  private chart() {
    const minutes = Array.from({ length: 21 }, (_, i) => `09:${String(i).padStart(2, "0")}`);
    return html`<main class="frame-box">
      <div class="left">
        <div class="labels main"><i></i>${PRICE_LABELS.map((t) => html`<span>${t}</span>`)}</div>
        <div class="tag last" style="top:${pctY(540)}"><b>2,650</b><span>,03%</span></div>
        <div class="tag cur" style="top:${pctY(780)}"><em>20,919</em><span>175,25</span></div>
      </div>
      <div class="cell">
        ${mainPlot()}
        <div class="legend"><i></i><span>삼진식품 매물대 수(13)</span></div>
        <span class="note hi" style="left:${pctX(306)};top:${pctY(134)}">최고 25,600 (-11,52%, 09:05)</span>
        <span class="note lo" style="left:${pctX(133)};top:${pctY(839)}">최저 20,550 (10,22%, 09:03)</span>
        <span class="note op" style="left:${pctX(1720)};top:${pctY(524)}">당일시가 22,900 (201,32%)</span>
      </div>
      <div class="right">
        <svg class="axis-svg" viewBox="0 77 46 820" preserveAspectRatio="none">${mainTicks}</svg>
        <div class="labels main"><i></i>${SCALE_LABELS.map((t) => html`<span>${t}</span>`)}</div>
        <div class="lchc">LC:10,22<span>HC:-11,5</span></div>
        <div class="tag last" style="top:${pctY(540)}"><b>22,650</b><span>198,03</span></div>
        <div class="tag cur" style="top:${pctY(780)}"><em>20,919</em><span>175,25%</span></div>
      </div>
      <div class="left cell">
        <svg class="axis-svg" viewBox="0 898 41 140" preserveAspectRatio="none">${subTicksLeft}</svg>
        <div class="labels sub"><i></i><span>0,00</span><span>50,000</span><span>00,000</span><span>50,000</span></div>
      </div>
      <div class="cell">${subPlot()}</div>
      <div class="right cell">
        <svg class="axis-svg" viewBox="0 898 46 140" preserveAspectRatio="none">${subTicksRight}</svg>
        <div class="labels sub"><i></i><span>0,00</span><span>-250,00</span><span>-500,00</span><span>-750,00</span></div>
        <button class="close" aria-label="닫기">${icon(svg`<path d="M2 2l4 4M6 2l-4 4" />`, 8, 8)}</button>
      </div>
      <div class="left"></div>
      <div class="times">
        ${minutes.map((t, i) => html`<span>${i === 13 ? "" : t}</span>`)}
        <div class="now" style="left:${pctX(1195)}">2025/12/22(월) 09:13:05</div>
      </div>
      <div class="right end">09:20:2</div>
    </main>`;
  }

  private footer() {
    return html`<footer class="foot">
      <button class="raised" aria-label="왼쪽으로">${icon(svg`<path class="solidico" d="M10 4v8L6 8z" />`)}</button>
      <div class="raised thumb"></div>
      <div class="track"></div>
      <button class="raised" aria-label="재생">${icon(svg`<path class="solidico" d="M6 4l5 4-5 4z" />`)}</button>
      <button class="raised" aria-label="뒤로">${icon(svg`<path class="solidico" d="M8 4v8L3 8zM13 4v8L8 8z" />`)}</button>
      <button class="raised" aria-label="정지">${icon(svg`<path class="solidico" d="M5 5h6v6H5z" />`)}</button>
      <button class="raised" aria-label="앞으로">${icon(svg`<path class="solidico" d="M3 4v8l5-4zM8 4v8l5-4z" />`)}</button>
      <div class="speed"><input type="range" aria-label="속도" min="0" max="10" value="1" /><i></i></div>
      ${TOOL_ICONS.map(([name, body], k) => html`<button class=${k === 3 ? "active" : ""} aria-label=${name}>${icon(body)}</button>`)}
      <button class="letter">A</button>
    </footer>`;
  }

  render() {
    return html`
      <header class="title">
        <span class="badge">1</span>
        <h1>[0601] 주식종합차트 - 거래대금[467,290(백만)] 시가총액[1,905(억)] 주식수[9,919(천)] 배당수익률[0] 외국인보유[67(천)] 업종[음식료/담배]</h1>
        <div class="winbtns">${WINDOW_ICONS.map(([name, body]) => html`<button aria-label=${name}>${icon(body)}</button>`)}</div>
        <div class="winctl">
          <button aria-label="최소화">${icon(svg`<path class="bold" d="M3 12h10" />`)}</button>
          <button aria-label="복원">${icon(svg`<path d="M2.500 7.500h7v6h-7zM2.500 8.500h7M5.500 7V4.500h7v6H10M5.500 5.500h7" />`)}</button>
          <button aria-label="닫기">${icon(svg`<path d="M4 4.500l8 8M12 4.500l-8 8" />`)}</button>
        </div>
      </header>
      <div class="body">
        <div class="tools">${this.toolbar()}${this.quote()}</div>
        ${this.chart()}
        ${this.footer()}
      </div>
    `;
  }
}
